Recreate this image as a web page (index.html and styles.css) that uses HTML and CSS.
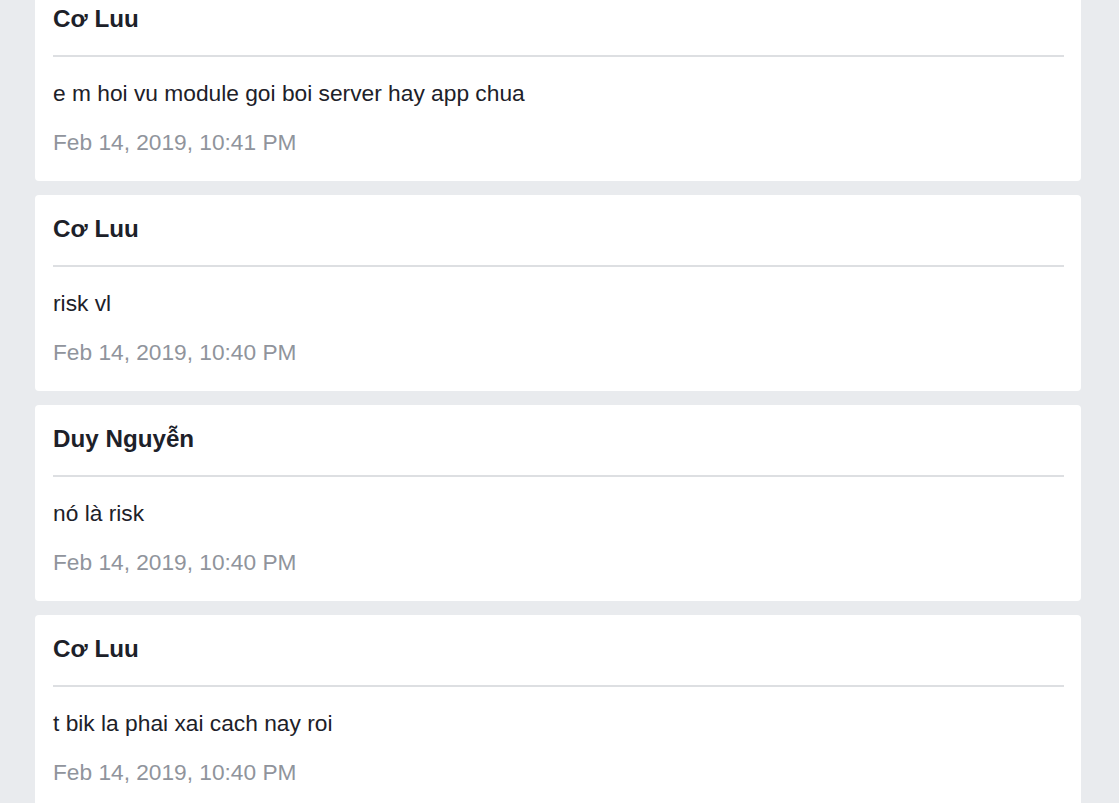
FILE: index.html
```html
<!DOCTYPE html>
<html lang="vi">
<head>
<meta charset="utf-8">
<title>Messages</title>
<link rel="stylesheet" href="styles.css">
</head>
<body>
<main class="feed">
  <article class="card">
    <h2 class="author">Cơ Luu</h2>
    <p class="message">e m hoi vu module goi boi server hay app chua</p>
    <time class="date">Feb 14, 2019, 10:41 PM</time>
  </article>
  <article class="card">
    <h2 class="author">Cơ Luu</h2>
    <p class="message">risk vl</p>
    <time class="date">Feb 14, 2019, 10:40 PM</time>
  </article>
  <article class="card">
    <h2 class="author">Duy Nguyễn</h2>
    <p class="message">nó là risk</p>
    <time class="date">Feb 14, 2019, 10:40 PM</time>
  </article>
  <article class="card">
    <h2 class="author">Cơ Luu</h2>
    <p class="message">t bik la phai xai cach nay roi</p>
    <time class="date">Feb 14, 2019, 10:40 PM</time>
  </article>
</main>
</body>
</html>
```
FILE: styles.css
```css
html, body {
  margin: 0;
  padding: 0;
  background: #e9ebee;
  font-family: "Liberation Sans", Arial, sans-serif;
  color: #1d2129;
}

.feed {
  display: flex;
  flex-direction: column;
  gap: 14px;
  margin: -15px 38px 0 35px;
}

.card {
  background: #ffffff;
  border-radius: 4px;
  padding: 19px 17px 24px 18px;
  display: flex;
  flex-direction: column;
}

.author {
  margin: 0;
  font-size: 24.2px;
  line-height: 30px;
  font-weight: bold;
  padding-bottom: 21px;
  border-bottom: 2px solid #dddfe2;
}

.message {
  margin: 21px 0 0;
  font-size: 22.75px;
  line-height: 30px;
}

.date {
  margin-top: 19px;
  font-size: 22.7px;
  line-height: 30px;
  color: #90949c;
}
```
